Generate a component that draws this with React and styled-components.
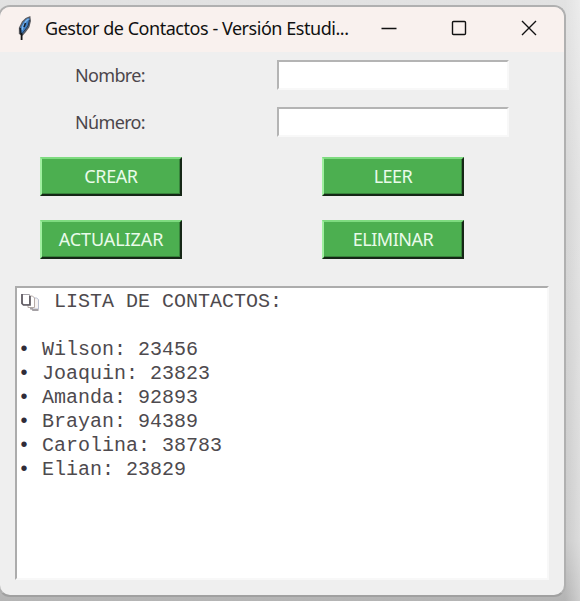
import React from "react";
import styled, { createGlobalStyle } from "styled-components";

const GlobalStyle = createGlobalStyle`
  * { box-sizing: border-box; }
  body { margin: 0; overflow: hidden; }
`;

const Desktop = styled.div`
  width: 580px;
  height: 601px;
  padding-top: 5px;
  overflow: hidden;
  background:
    linear-gradient(90deg, rgba(0, 0, 0, 0) 565px, rgba(255, 255, 255, 0.35) 580px),
    linear-gradient(180deg, #e2e2e2, #d6d6d6 30%, #cacaca 90%, #b4b4b4);
  font-family: "Noto Sans", "Open Sans", sans-serif;
`;

const Window = styled.main`
  width: 568px;
  height: 592px;
  margin-left: -2px;
  border: 2px solid #b0b0b0;
  border-bottom-color: #a0a0a0;
  border-radius: 12px;
  overflow: hidden;
  background: #efefef;
`;

const TitleBar = styled.header`
  display: flex;
  align-items: center;
  height: 45px;
  padding: 0 27px 3px 16px;
  background: #f9f1ee;
`;

const Title = styled.h1`
  flex: 1;
  margin: 0 0 0 12px;
  color: #111;
  font-size: 18px;
  font-weight: 400;
  line-height: 24px;
  letter-spacing: -0.46px;
  white-space: nowrap;
`;

const WindowControls = styled.div`
  display: flex;
  gap: 54px;
`;

const ControlButton = styled.button`
  display: flex;
  width: 16px;
  height: 16px;
  padding: 0;
  border: 0;
  background: none;
`;

const Field = styled.label`
  display: grid;
  grid-template-columns: 218px 232px;
  align-items: center;
  height: 30px;
  margin: ${(p) => p.$top}px 0 0 59px;
`;

const FieldName = styled.span`
  padding-left: 16px;
  color: #4b464b;
  font-size: 18px;
  line-height: 24px;
  letter-spacing: ${(p) => p.$tracking}px;
`;

const Input = styled.input`
  width: 232px;
  height: 30px;
  padding: 0 4px;
  border: 2px solid;
  border-color: #b4b4b4 #f8f8f8 #f8f8f8 #b4b4b4;
  background: #fff;
  outline: 0;
`;

const Actions = styled.div`
  display: grid;
  grid-template-columns: 142px 142px;
  gap: 24px 140px;
  margin: 20px 0 0 40px;
`;

const Action = styled.button`
  height: 39px;
  padding: 0 0 1px;
  border: 2px solid;
  border-color: #7edb80 #152616 #152616 #a0efa0;
  box-shadow: inset -1px -1px #37843b;
  background: #4caf50;
  color: #e9fbea;
  font: 400 18px/24px "Noto Sans", "Open Sans", sans-serif;
  letter-spacing: ${(p) => p.$tracking}px;
  white-space: nowrap;
`;

const ContactList = styled.section`
  width: 534px;
  height: 294px;
  margin: 27px 0 0 15px;
  padding: 2px 3px;
  border: 2px solid;
  border-color: #acacac #f8f8f8 #f8f8f8 #acacac;
  background: #fff;
  color: #4e4a4e;
  font: 400 20px/24px "Liberation Mono", "Courier New", monospace;
`;

const ListTitle = styled.h2`
  display: flex;
  align-items: center;
  height: 24px;
  margin: 0 0 24px;
  font: inherit;
  white-space: pre;
`;

const Contacts = styled.ul`
  margin: 0;
  padding: 0;
  list-style: none;
`;

const Contact = styled.li`
  display: grid;
  grid-template-columns: 22px auto;
  height: 24px;

  &::before {
    content: "•";
    width: 10px;
    margin-left: -2px;
    color: #302c38;
  }
`;

const TitleText = styled.span`
  margin-left: 14px;
`;

function Feather() {
  return (
    <svg width="17" height="26" viewBox="0 0 17 26" aria-hidden="true">
      <path d="M13.8 2 L14.3 6 12.8 12 9 17 6.5 20 3.5 18.5 3.5 13 6.5 7 10 3.5Z" fill="#3f7fc4" stroke="#5d5c60" strokeWidth="1.3" />
      <path d="M12.5 4 L10 6 7 11 6 15" fill="none" stroke="#7db8f0" strokeWidth="1.4" />
      <path d="M4.3 13 L4.8 18 5.6 20 M9.5 8 L8 12" fill="none" stroke="#17202c" strokeWidth="1.6" />
      <path d="M13.5 5 L12 11 9 15 6.5 18" fill="none" stroke="#25354a" strokeWidth="1" />
      <path d="M5.6 18 V25" stroke="#151515" strokeWidth="1.8" />
    </svg>
  );
}

function Pages() {
  return (
    <svg width="20" height="19" viewBox="0 0 20 19" aria-hidden="true">
      <path d="M11.5 5 H16.5 L18.5 6.5 V16 H11.5Z" fill="#f7f4f4" stroke="#b9bfd0" />
      <path d="M8 3 H12.5 L14.5 5 V14.5 H8Z" fill="#fff" stroke="#b5aaa7" />
      <path d="M2 1.5 H9.5 V11.5 H3.5 L2 10.5Z" fill="#fff" stroke="#a5a2a8" strokeWidth="1" />
      <path d="M2 1 V10.5 L3.5 12 H10 V3" fill="none" stroke="#5e5961" strokeWidth="1.7" />
      <path d="M10 15.5 H12 L13 17 H18.5" fill="none" stroke="#a5a1a5" strokeWidth="1.8" />
    </svg>
  );
}

const contacts = [
  ["Wilson", "23456"],
  ["Joaquin", "23823"],
  ["Amanda", "92893"],
  ["Brayan", "94389"],
  ["Carolina", "38783"],
  ["Elian", "23829"],
];

const controls = [
  { name: "Minimizar", d: "M0.5 8.5 H15.5" },
  { name: "Maximizar", d: "M2.5 1.5 H13.5 Q14.5 1.5 14.5 2.5 V13.5 Q14.5 14.5 13.5 14.5 H2.5 Q1.5 14.5 1.5 13.5 V2.5 Q1.5 1.5 2.5 1.5Z" },
  { name: "Cerrar", d: "M1 1 L15 15 M15 1 L1 15" },
];

export default function App() {
  return (
    <Desktop>
      <GlobalStyle />
      <Window>
        <TitleBar>
          <Feather />
          <Title>Gestor de Contactos - Versión Estudi...</Title>
          <WindowControls>
            {controls.map((c) => (
              <ControlButton key={c.name} aria-label={c.name}>
                <svg width="16" height="16" viewBox="0 0 16 16">
                  <path d={c.d} fill="none" stroke="#111" strokeWidth="1.4" />
                </svg>
              </ControlButton>
            ))}
          </WindowControls>
        </TitleBar>
        <Field $top={8}>
          <FieldName $tracking={-0.65}>Nombre:</FieldName>
          <Input />
        </Field>
        <Field $top={17}>
          <FieldName $tracking={-0.65}>Número:</FieldName>
          <Input />
        </Field>
        <Actions>
          <Action $tracking={-0.4}>CREAR</Action>
          <Action $tracking={-0.5}>LEER</Action>
          <Action $tracking={-0.1}>ACTUALIZAR</Action>
          <Action $tracking={-0.5}>ELIMINAR</Action>
        </Actions>
        <ContactList>
          <ListTitle>
            <Pages />
            <TitleText>LISTA DE CONTACTOS:</TitleText>
          </ListTitle>
          <Contacts>
            {contacts.map(([name, number]) => (
              <Contact key={name}>{name}: {number}</Contact>
            ))}
          </Contacts>
        </ContactList>
      </Window>
    </Desktop>
  );
}
